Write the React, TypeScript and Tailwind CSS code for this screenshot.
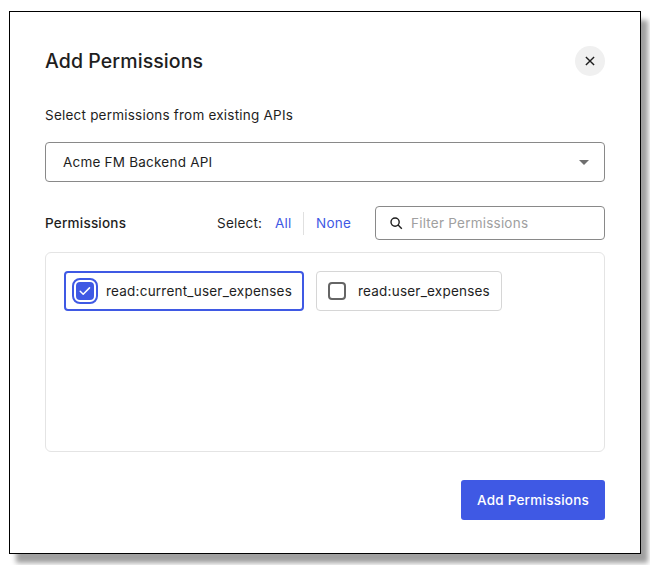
import React from "react";

type PermissionProps = { name: string; checked?: boolean };

function Permission({ name, checked = false }: PermissionProps) {
  return (
    <label
      className={
        checked
          ? "flex h-10 w-[240px] items-center rounded border-2 border-[#3f59e4] pl-[11px]"
          : "flex h-10 w-[186px] items-center rounded border border-[#d6d6d6] pl-[11px]"
      }
    >
      {checked ? (
        <span className="-ml-[5px] flex size-[26px] shrink-0 items-center justify-center rounded-[8px] border-2 border-[#3f59e4]">
          <span className="flex size-[18px] items-center justify-center rounded-[4px] bg-[#3f59e4]">
            <svg width="12" height="10" viewBox="0 0 12 10" fill="none" stroke="white" strokeWidth="1.5" strokeLinecap="round" strokeLinejoin="round">
              <path d="M1.2 5.2 4.2 8.2 10.5 1.9" />
            </svg>
          </span>
        </span>
      ) : (
        <span className="size-[18px] shrink-0 rounded-[4px] border-2 border-[#656565]" />
      )}
      <span className={checked ? "ml-2" : "ml-[12px]"}>{name}</span>
    </label>
  );
}

export default function App() {
  return (
    <div className="h-[565px] w-[650px] overflow-hidden bg-white pt-[11px] pl-[9px] font-['Inter',sans-serif] text-[13.5px] leading-5 tracking-[0.22px]">
      <section className="flex h-[543px] w-[632px] flex-col border border-black bg-white px-[35px] text-[#1e1e1e] shadow-[7px_9px_5px_#a0a0a0]">
        <header className="mt-[34px] flex h-[30px] items-center justify-between">
          <h1 className="text-[19.5px] leading-7 font-medium tracking-[0.09px]">Add Permissions</h1>
          <button aria-label="Close" className="flex size-[30px] items-center justify-center rounded-full bg-[#f0f0f0]">
            <svg width="10" height="10" viewBox="0 0 10 10" stroke="#1e1e1e" strokeWidth="1.4">
              <path d="M.9.9 9.1 9.1M9.1.9.9 9.1" />
            </svg>
          </button>
        </header>
        <p className="mt-[29px]">Select permissions from existing APIs</p>
        <div className="mt-[17px] flex h-10 shrink-0 items-center justify-between rounded border border-[#898989] pr-[15px] pl-[17px]">
          <span>Acme FM Backend API</span>
          <svg width="10" height="5" viewBox="0 0 10 5" fill="#6f6f6f">
            <path d="M0 0h10L5 5Z" />
          </svg>
        </div>
        <div className="mt-6 flex h-[34px] shrink-0 items-center">
          <span className="w-[172px] font-medium">Permissions</span>
          <span className="w-[58px]">Select:</span>
          <button className="w-[28px] text-left text-[#3f59e4]">All</button>
          <span className="h-[23px] w-px bg-[#e0e0e0]" />
          <button className="ml-3 w-[59px] text-left text-[#3f59e4]">None</button>
          <div className="flex h-[34px] flex-1 items-center rounded border border-[#898989] pl-[14px]">
            <svg width="13" height="13" viewBox="0 0 13 13" fill="none" stroke="#1e1e1e" strokeWidth="1.4">
              <circle cx="5.1" cy="5.1" r="4.1" />
              <path d="m8.1 8.1 3.7 3.7" />
            </svg>
            <span className="ml-2 text-[#a0a0a0]">Filter Permissions</span>
          </div>
        </div>
        <div className="mt-3 flex h-[200px] shrink-0 items-start gap-3 rounded-md border border-[#e4e4e4] px-[18px] pt-[18px]">
          <Permission name="read:current_user_expenses" checked />
          <Permission name="read:user_expenses" />
        </div>
        <button className="mt-7 h-10 w-36 shrink-0 self-end rounded-[3px] bg-[#3f59e4] font-medium tracking-[0.24px] text-white">
          Add Permissions
        </button>
      </section>
    </div>
  );
}
